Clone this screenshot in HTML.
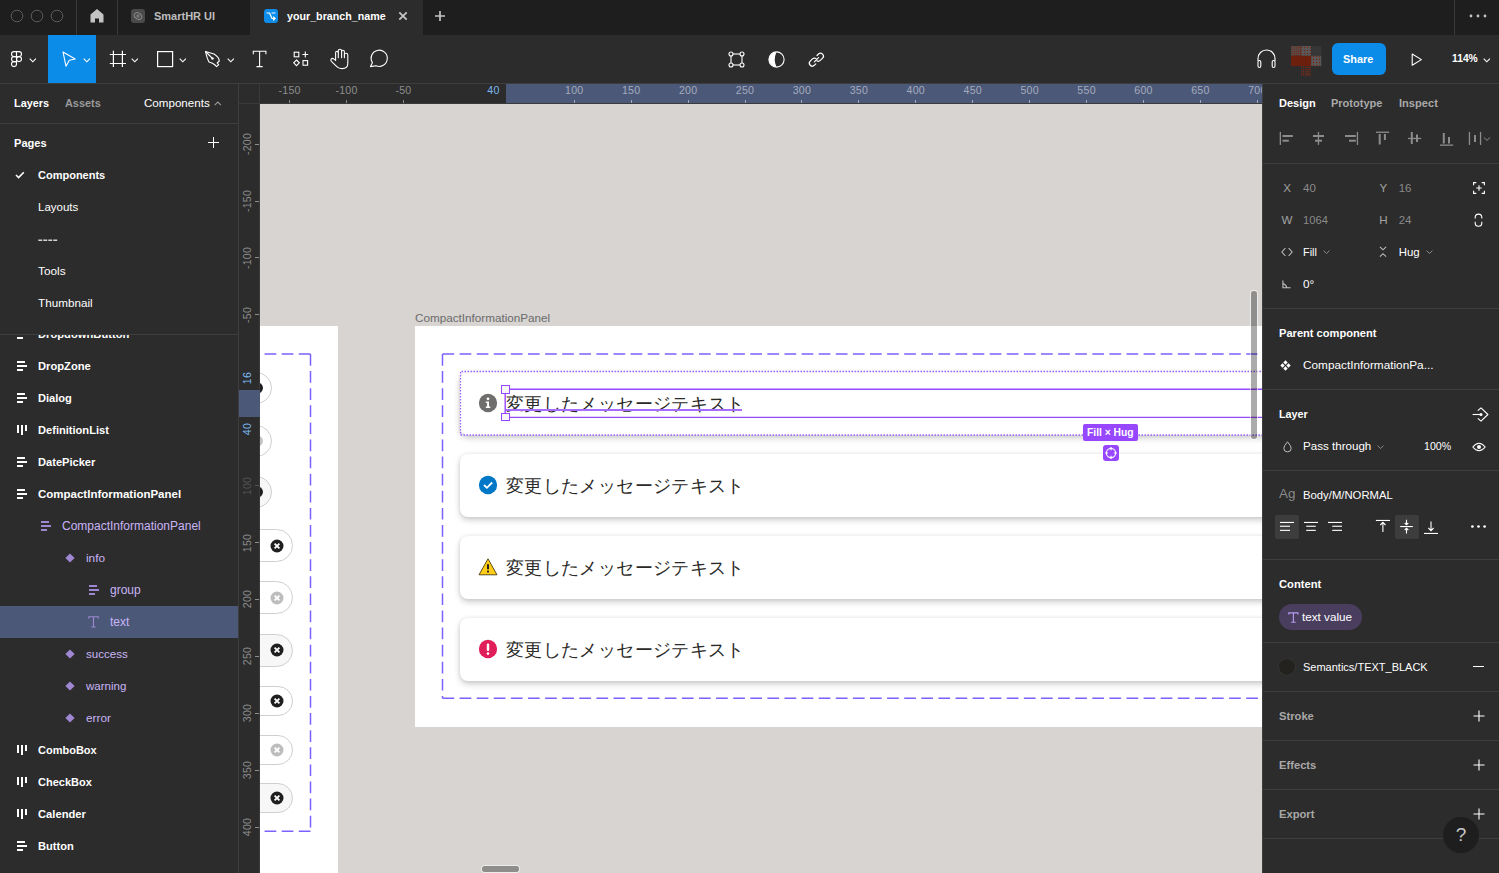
<!DOCTYPE html>
<html><head><meta charset="utf-8">
<style>
*{box-sizing:border-box;margin:0;padding:0}
html,body{width:1499px;height:873px;overflow:hidden;background:#2c2c2c;font-family:"Liberation Sans",sans-serif;color:#fff}
.a{position:absolute}
.t{position:absolute;white-space:nowrap;font-size:12px;line-height:14px}
.b{font-weight:bold}
svg{position:absolute;overflow:visible}
/* title bar */
#title{left:0;top:0;width:1499px;height:35px;background:#1e1e1e}
#toolbar{left:0;top:35px;width:1499px;height:49px;z-index:5;background:#2c2c2c;border-bottom:1px solid #3e3e3e}
#left{left:0;top:83px;width:239px;z-index:4;height:790px;background:#2c2c2c;border-right:1px solid #3e3e3e}
#right{left:1262px;top:83px;width:237px;height:790px;background:#2c2c2c;border-left:1px solid #3e3e3e}
#canvas{left:238px;top:83px;width:1024px;height:790px;background:#d7d4d1;overflow:hidden}
.hr{position:absolute;height:1px;background:#3e3e3e}
</style></head><body>
<div id="title" class="a">
<svg width="80" height="35" style="left:0;top:0"><g fill="none" stroke="#5a5a5a" stroke-width="1"><circle cx="17" cy="16" r="5.8"/><circle cx="37" cy="16" r="5.8"/><circle cx="57" cy="16" r="5.8"/></g></svg>
<div class="a" style="left:76px;top:0;width:1px;height:35px;background:#383838"></div>
<div class="a" style="left:117px;top:0;width:1px;height:35px;background:#383838"></div>
<svg width="16" height="16" style="left:89px;top:8.3px"><path d="M8 1 L14.5 6.5 V14.5 H10 V10.5 H6 V14.5 H1.5 V6.5 Z" fill="#c4c4c4"/></svg>
<div class="a" style="left:131px;top:9px;width:14px;height:14px;border-radius:3px;background:#4b4b4b"></div>
<svg width="14" height="14" style="left:131px;top:9px"><g fill="none" stroke="#8a8a8a" stroke-width="1"><ellipse cx="7" cy="7" rx="4" ry="3" transform="rotate(35 7 7)"/><circle cx="7" cy="7" r="1.2"/></g></svg>
<div class="t" style="left:154px;top:9px;font-size:11.0px;color:#bdbdbd;font-weight:bold">SmartHR UI</div>
<div class="a" style="left:250px;top:0;width:173px;height:35px;background:#2c2c2c"></div>
<div class="a" style="left:264px;top:9px;width:14px;height:14px;border-radius:3px;background:#0d8ce9"></div>
<svg width="14" height="14" style="left:264px;top:9px"><g fill="none" stroke="#fff" stroke-width="1.2" stroke-linecap="round" stroke-linejoin="round"><path d="M3 4 H5.5 L8 9.5 H11"/><path d="M9.5 8 L11 9.5 L9.5 11"/><path d="M8 4 H11"/></g></svg>
<div class="t" style="left:287px;top:9px;font-size:10.7px;color:#fff;font-weight:bold">your_branch_name</div>
<svg width="12" height="12" style="left:397px;top:10px"><g stroke="#c4c4c4" stroke-width="1.8"><path d="M2.3 2.3 L9.7 9.7 M9.7 2.3 L2.3 9.7"/></g></svg>
<svg width="14" height="14" style="left:433px;top:9px"><g stroke="#c4c4c4" stroke-width="1.7"><path d="M7 2 V12 M2 7 H12"/></g></svg>
<div class="a" style="left:1454px;top:0;width:1px;height:35px;background:#383838"></div>
<svg width="20" height="6" style="left:1469px;top:13px"><g fill="#c4c4c4"><circle cx="2" cy="3" r="1.4"/><circle cx="9" cy="3" r="1.4"/><circle cx="16" cy="3" r="1.4"/></g></svg>
</div>
<div id="toolbar" class="a">
<svg width="12" height="17" style="left:11px;top:16px"><g fill="none" stroke="#fff" stroke-width="1.1"><path d="M5.5 0.6 H3 A2.5 2.5 0 0 0 3 5.6 H5.5 Z"/><path d="M5.5 0.6 H8 A2.5 2.5 0 0 1 8 5.6 H5.5 Z"/><path d="M5.5 5.6 H3 A2.5 2.5 0 0 0 3 10.6 H5.5 Z"/><circle cx="8" cy="8.1" r="2.5"/><path d="M5.5 10.6 H3 A2.5 2.5 0 1 0 5.5 13.1 Z"/></g></svg>
<svg width="8" height="5" style="left:29px;top:23px"><path d="M0.7 0.7 L3.8 3.8 L6.9 0.7" fill="none" stroke="#fff" stroke-width="1.1"/></svg>
<div class="a" style="left:48px;top:0;width:48px;height:48px;background:#0c8ce9"></div>
<svg width="14" height="16" style="left:62px;top:16px"><path d="M1 1 L13.2 8 L7.3 9.2 L4 15.2 Z" fill="none" stroke="#fff" stroke-width="1.1" stroke-linejoin="round"/></svg>
<svg width="8" height="5" style="left:83px;top:23px"><path d="M0.7 0.7 L3.8 3.8 L6.9 0.7" fill="none" stroke="#fff" stroke-width="1.1"/></svg>
<svg width="18" height="18" style="left:109px;top:15px"><g stroke="#fff" stroke-width="1.2"><path d="M4.4 0.8 V17 M13.4 0.8 V17 M0.8 4.5 H17 M0.8 13.5 H17"/></g></svg>
<svg width="8" height="5" style="left:131px;top:23px"><path d="M0.7 0.7 L3.8 3.8 L6.9 0.7" fill="none" stroke="#fff" stroke-width="1.1"/></svg>
<svg width="18" height="18" style="left:156px;top:15px"><rect x="1.6" y="1.6" width="15" height="15" fill="none" stroke="#fff" stroke-width="1.2"/></svg>
<svg width="8" height="5" style="left:179px;top:23px"><path d="M0.7 0.7 L3.8 3.8 L6.9 0.7" fill="none" stroke="#fff" stroke-width="1.1"/></svg>
<svg width="18" height="18" style="left:204px;top:15px"><g fill="none" stroke="#fff" stroke-width="1.1" stroke-linejoin="round"><path d="M1.5 1.5 L10 4 Q15 7 15.3 11 L13.2 13 L14.7 14.6 L12.6 16.6 L11 15 Q9 13 5 12 Q3 8.5 1.5 1.5 Z"/><path d="M1.5 1.5 L8 8"/></g><circle cx="8.5" cy="8.5" r="1.2" fill="#fff"/></svg>
<svg width="8" height="5" style="left:227px;top:23px"><path d="M0.7 0.7 L3.8 3.8 L6.9 0.7" fill="none" stroke="#fff" stroke-width="1.1"/></svg>
<svg width="16" height="18" style="left:252px;top:15px"><g fill="none" stroke="#fff" stroke-width="1.1"><path d="M1.3 4.2 V1.2 H13.9 V4.2 M7.6 1.2 V16.6 M4.5 16.6 H10.7"/></g></svg>
<svg width="17" height="17" style="left:293px;top:16px"><g fill="none" stroke="#fff" stroke-width="1.1"><rect x="1.2" y="1.2" width="4.6" height="4.6"/><path d="M12.3 0.6 V6.4 M9.4 3.5 H15.2"/><path d="M3.5 9 L6.3 11.8 L3.5 14.6 L0.7 11.8 Z"/><rect x="10" y="9.6" width="4.6" height="4.6"/></g></svg>
<svg width="30" height="28" style="left:326px;top:10px"><g fill="none" stroke="#fff" stroke-width="1.1" stroke-linejoin="round" stroke-linecap="round"><path d="M9.6 15.4 V7.65 A1.35 1.35 0 0 1 12.3 7.65 V5.85 A1.65 1.65 0 0 1 15.6 5.85 V6.7 A1.4 1.4 0 0 1 18.4 6.7 V9.9 A1.7 1.7 0 0 1 21.8 9.9 V18.5 Q21.8 23.6 16 23.6 Q12.8 23.6 10.8 21.6 L5.4 16.4 Q4.3 15.2 5.2 14 Q6.5 12.8 8 14.1 L9.6 15.4"/><path d="M12.3 7.65 V12.8 M15.6 6.7 V12.8 M18.4 9.9 V12.8"/></g></svg>
<svg width="21" height="21" style="left:369.3px;top:14.3px"><path d="M1.5 17.6 L3.4 13.7 A8.1 8.1 0 1 1 6.9 16.7 Z" fill="none" stroke="#fff" stroke-width="1.1" stroke-linejoin="round"/></svg>
<svg width="18" height="18" style="left:727.5px;top:15.6px"><g fill="none" stroke="#fff" stroke-width="1.1"><rect x="3" y="3" width="11" height="11"/><circle cx="3" cy="3" r="2" fill="#2c2c2c"/><circle cx="14" cy="3" r="2" fill="#2c2c2c"/><circle cx="3" cy="14" r="2" fill="#2c2c2c"/><circle cx="14" cy="14" r="2" fill="#2c2c2c"/></g></svg>
<svg width="18" height="18" style="left:767.5px;top:15.6px"><circle cx="8.5" cy="8.5" r="7.6" fill="none" stroke="#fff" stroke-width="1.1"/><path d="M8.5 0.9 A7.6 7.6 0 0 0 8.5 16.1 Q5 8.5 8.5 0.9 Z" fill="#fff"/></svg>
<svg width="18" height="18" style="left:808px;top:16px"><g fill="none" stroke="#fff" stroke-width="1.2" stroke-linecap="round"><path d="M9 4.5 L10.5 3 A2.9 2.9 0 0 1 14.6 7.1 L12.3 9.4 A2.9 2.9 0 0 1 8.8 9.8"/><path d="M7.8 12.8 L6.3 14.3 A2.9 2.9 0 0 1 2.2 10.2 L4.5 7.9 A2.9 2.9 0 0 1 8 7.5"/><path d="M6.3 10.9 L10.6 6.6"/></g></svg>
<svg width="22" height="20" style="left:1256px;top:14px"><g fill="none" stroke="#fff" stroke-width="1.1"><path d="M2 12 V9.5 A8.5 8.5 0 0 1 19 9.5 V12"/><rect x="2" y="11.5" width="2.8" height="7" rx="1.4"/><rect x="16.2" y="11.5" width="2.8" height="7" rx="1.4"/></g></svg>
<svg width="32" height="36" style="left:1290.8px;top:10.9px"><defs>
<pattern id="pa" width="2.1" height="2.1" patternUnits="userSpaceOnUse"><rect width="2.1" height="2.1" fill="#505050"/><circle cx="1.05" cy="1.05" r="0.75" fill="#7a2210"/></pattern>
<pattern id="pb" width="3" height="3" patternUnits="userSpaceOnUse"><rect width="3" height="3" fill="#595959"/><circle cx="1.5" cy="1.5" r="0.7" fill="#7a2210"/></pattern>
<pattern id="pc" width="2" height="2" patternUnits="userSpaceOnUse"><rect width="2" height="2" fill="#333"/><circle cx="1" cy="1" r="0.5" fill="#444"/></pattern>
<pattern id="pd" width="2.2" height="2.2" patternUnits="userSpaceOnUse"><rect width="2.2" height="2.2" fill="#2c2c2c"/><circle cx="1.5" cy="1.5" r="0.75" fill="#8a2814"/></pattern>
</defs>
<rect x="0" y="0" width="10.1" height="9.8" fill="url(#pa)"/><rect x="10.1" y="0" width="10.1" height="9.8" fill="url(#pb)"/><rect x="20.2" y="0" width="10" height="9.8" fill="url(#pc)"/>
<rect x="0" y="9.8" width="20.2" height="10.3" fill="#6d1f0e"/><rect x="20.2" y="9.8" width="10" height="10.3" fill="url(#pb)"/>
<rect x="10.1" y="20.1" width="9.5" height="10" fill="url(#pd)"/>
</svg>
<div class="a" style="left:1332px;top:8px;width:54px;height:32px;border-radius:6px;background:#0c8ce9"></div>
<div class="t b" style="left:1343px;top:17px;font-size:10.9px">Share</div>
<svg width="12" height="14" style="left:1411.3px;top:17.6px"><path d="M1.2 1 L10.4 6.6 L1.2 12.2 Z" fill="none" stroke="#fff" stroke-width="1.1" stroke-linejoin="round"/></svg>
<div class="t b" style="left:1452px;top:17px;font-size:10.3px">114%</div>
<svg width="8" height="5" style="left:1483px;top:23px"><path d="M0.7 0.7 L3.8 3.8 L6.9 0.7" fill="none" stroke="#fff" stroke-width="1.1"/></svg>
</div>
<div id="left" class="a">
<div class="t b" style="left:14px;top:13px;font-size:10.9px">Layers</div>
<div class="t b" style="left:65px;top:13px;font-size:10.9px;color:#9a9a9a">Assets</div>
<div class="t" style="left:144px;top:13px;font-size:11.6px">Components</div>
<svg width="8" height="5" style="left:214px;top:18px"><path d="M0.7 4.2 L3.8 1.1 L6.9 4.2" fill="none" stroke="#9a9a9a" stroke-width="1.1"/></svg>
<div class="hr" style="left:0;top:40px;width:238px"></div>
<div class="t b" style="left:14px;top:53px;font-size:11.1px">Pages</div>
<svg width="12" height="12" style="left:207px;top:54px"><path d="M6.5 0 V11 M1 5.5 H12" stroke="#fff" stroke-width="1"/></svg>
<svg width="10" height="8" style="left:15px;top:88px"><path d="M1 4 L3.6 6.6 L8.8 1.2" fill="none" stroke="#fff" stroke-width="1.6"/></svg>
<div class="t b" style="left:38px;top:85px;font-size:11px">Components</div>
<div class="t" style="left:38px;top:117px;font-size:11.5px">Layouts</div>
<svg width="22" height="4" style="left:38px;top:155.5px"><g fill="#fff"><rect x="0.3" y="0.6" width="3.9" height="1.2"/><rect x="5.3" y="0.6" width="3.9" height="1.2"/><rect x="10.3" y="0.6" width="3.9" height="1.2"/><rect x="15.3" y="0.6" width="3.9" height="1.2"/></g></svg>
<div class="t" style="left:38px;top:181px;font-size:11.8px">Tools</div>
<div class="t" style="left:38px;top:213px;font-size:11.7px">Thumbnail</div>
<div class="a" style="left:0;top:251px;width:238px;height:539px;overflow:hidden">
<svg width="12" height="12" style="left:17px;top:-5px"><g fill="#ffffff"><rect x="0" y="0" width="8" height="2"/><rect x="0" y="4" width="10" height="2"/><rect x="0" y="8" width="6" height="2"/></g></svg><div class="t" style="left:38px;top:-7px;color:#ffffff;font-weight:bold;font-size:11.2px">DropdownButton</div><svg width="12" height="12" style="left:17px;top:27px"><g fill="#ffffff"><rect x="0" y="0" width="8" height="2"/><rect x="0" y="4" width="10" height="2"/><rect x="0" y="8" width="6" height="2"/></g></svg><div class="t" style="left:38px;top:25px;color:#ffffff;font-weight:bold;font-size:11.2px">DropZone</div><svg width="12" height="12" style="left:17px;top:59px"><g fill="#ffffff"><rect x="0" y="0" width="8" height="2"/><rect x="0" y="4" width="10" height="2"/><rect x="0" y="8" width="6" height="2"/></g></svg><div class="t" style="left:38px;top:57px;color:#ffffff;font-weight:bold;font-size:11.1px">Dialog</div><svg width="12" height="12" style="left:17px;top:91px"><g fill="#ffffff"><rect x="0" y="0" width="2" height="8"/><rect x="4" y="0" width="2" height="10"/><rect x="8" y="0" width="2" height="6"/></g></svg><div class="t" style="left:38px;top:89px;color:#ffffff;font-weight:bold;font-size:11.1px">DefinitionList</div><svg width="12" height="12" style="left:17px;top:123px"><g fill="#ffffff"><rect x="0" y="0" width="8" height="2"/><rect x="0" y="4" width="10" height="2"/><rect x="0" y="8" width="6" height="2"/></g></svg><div class="t" style="left:38px;top:121px;color:#ffffff;font-weight:bold;font-size:11.1px">DatePicker</div><svg width="12" height="12" style="left:17px;top:155px"><g fill="#ffffff"><rect x="0" y="0" width="8" height="2"/><rect x="0" y="4" width="10" height="2"/><rect x="0" y="8" width="6" height="2"/></g></svg><div class="t" style="left:38px;top:153px;color:#ffffff;font-weight:bold;font-size:11.5px">CompactInformationPanel</div><svg width="12" height="12" style="left:41px;top:187px"><g fill="#9f88d2"><rect x="0" y="0" width="8" height="2"/><rect x="0" y="4" width="10" height="2"/><rect x="0" y="8" width="6" height="2"/></g></svg><div class="t" style="left:62px;top:185px;color:#c9b5f6;font-weight:normal;font-size:12px">CompactInformationPanel</div><svg width="12" height="12" style="left:65px;top:219px"><path d="M5 0.4 L9.6 5 L5 9.6 L0.4 5 Z" fill="#9f88d2"/></svg><div class="t" style="left:86px;top:217px;color:#c9b5f6;font-weight:normal;font-size:11.8px">info</div><svg width="12" height="12" style="left:89px;top:251px"><g fill="#9f88d2"><rect x="0" y="0" width="8" height="2"/><rect x="0" y="4" width="10" height="2"/><rect x="0" y="8" width="6" height="2"/></g></svg><div class="t" style="left:110px;top:249px;color:#c9b5f6;font-weight:normal;font-size:12.0px">group</div><div class="a" style="left:0;top:272px;width:238px;height:32px;background:#4b5878"></div><svg width="12" height="12" style="left:88px;top:282px"><g fill="none" stroke="#9f88d2" stroke-width="1.1"><path d="M0.8 2.6 V0.8 H10.2 V2.6 M5.5 0.8 V11 M3.3 11 H7.7"/></g></svg><div class="t" style="left:110px;top:281px;color:#c9b5f6;font-weight:normal;font-size:12.0px">text</div><svg width="12" height="12" style="left:65px;top:315px"><path d="M5 0.4 L9.6 5 L5 9.6 L0.4 5 Z" fill="#9f88d2"/></svg><div class="t" style="left:86px;top:313px;color:#c9b5f6;font-weight:normal;font-size:11.6px">success</div><svg width="12" height="12" style="left:65px;top:347px"><path d="M5 0.4 L9.6 5 L5 9.6 L0.4 5 Z" fill="#9f88d2"/></svg><div class="t" style="left:86px;top:345px;color:#c9b5f6;font-weight:normal;font-size:11.5px">warning</div><svg width="12" height="12" style="left:65px;top:379px"><path d="M5 0.4 L9.6 5 L5 9.6 L0.4 5 Z" fill="#9f88d2"/></svg><div class="t" style="left:86px;top:377px;color:#c9b5f6;font-weight:normal;font-size:11.8px">error</div><svg width="12" height="12" style="left:17px;top:411px"><g fill="#ffffff"><rect x="0" y="0" width="2" height="8"/><rect x="4" y="0" width="2" height="10"/><rect x="8" y="0" width="2" height="6"/></g></svg><div class="t" style="left:38px;top:409px;color:#ffffff;font-weight:bold;font-size:11.0px">ComboBox</div><svg width="12" height="12" style="left:17px;top:443px"><g fill="#ffffff"><rect x="0" y="0" width="2" height="8"/><rect x="4" y="0" width="2" height="10"/><rect x="8" y="0" width="2" height="6"/></g></svg><div class="t" style="left:38px;top:441px;color:#ffffff;font-weight:bold;font-size:11.0px">CheckBox</div><svg width="12" height="12" style="left:17px;top:475px"><g fill="#ffffff"><rect x="0" y="0" width="2" height="8"/><rect x="4" y="0" width="2" height="10"/><rect x="8" y="0" width="2" height="6"/></g></svg><div class="t" style="left:38px;top:473px;color:#ffffff;font-weight:bold;font-size:11.2px">Calender</div><svg width="12" height="12" style="left:17px;top:507px"><g fill="#ffffff"><rect x="0" y="0" width="8" height="2"/><rect x="0" y="4" width="10" height="2"/><rect x="0" y="8" width="6" height="2"/></g></svg><div class="t" style="left:38px;top:505px;color:#ffffff;font-weight:bold;font-size:11.1px">Button</div></div>
<div class="hr" style="left:0;top:251px;width:238px"></div>
</div>
<div id="canvas" class="a"><div class="a" style="left:-238px;top:-83px;width:1499px;height:873px">
<!-- left frame -->
<div class="a" style="left:260px;top:326px;width:78.2px;height:560px;background:#fff"></div>
<svg width="1499" height="873" style="left:0;top:0">
<g fill="none" stroke="#7b61ff" stroke-width="1.5" stroke-dasharray="11.7 5.4">
<path d="M310.5 354 H200"/><path d="M310.5 354 V831.3"/><path d="M310.5 831.3 H200"/>
</g></svg>
<div class="a" style="left:240px;top:372px;width:32px;height:32px;border-radius:50%;border:1px solid #cfcfcf;background:#fff"></div><div class="a" style="left:250px;top:382px;width:13px;height:12px;border-radius:50%;background:#1f1f1f"></div><div class="a" style="left:240px;top:425px;width:32px;height:32px;border-radius:50%;border:1px solid #cfcfcf;background:#fff"></div><div class="a" style="left:250px;top:435px;width:13px;height:12px;border-radius:50%;background:#c4c4c4"></div><div class="a" style="left:240px;top:476px;width:32px;height:32px;border-radius:50%;border:1px solid #cfcfcf;background:#f7f7f7"></div><div class="a" style="left:250px;top:486px;width:13px;height:12px;border-radius:50%;background:#1f1f1f"></div><div class="a" style="left:200px;top:529.4px;width:92.5px;height:33px;border-radius:16.5px;border:1px solid #cfcfcf;background:#fff"></div><svg width="14" height="14" style="left:270.3px;top:538.9px"><circle cx="7" cy="7" r="6.5" fill="#1f1f1f"/><path d="M4.6 4.6 L9.4 9.4 M9.4 4.6 L4.6 9.4" stroke="#fff" stroke-width="1.8"/></svg><div class="a" style="left:200px;top:581.3px;width:92.5px;height:33px;border-radius:16.5px;border:1px solid #cfcfcf;background:#fff"></div><svg width="14" height="14" style="left:270.3px;top:590.8px"><circle cx="7" cy="7" r="6.5" fill="#bdbdbd"/><path d="M4.6 4.6 L9.4 9.4 M9.4 4.6 L4.6 9.4" stroke="#fff" stroke-width="1.8"/></svg><div class="a" style="left:200px;top:633.5px;width:92.5px;height:33px;border-radius:16.5px;border:1px solid #cfcfcf;background:#f7f7f7"></div><svg width="14" height="14" style="left:270.3px;top:643px"><circle cx="7" cy="7" r="6.5" fill="#1f1f1f"/><path d="M4.6 4.6 L9.4 9.4 M9.4 4.6 L4.6 9.4" stroke="#fff" stroke-width="1.8"/></svg><div class="a" style="left:200px;top:685.8px;width:92.5px;height:30px;border-radius:15.0px;border:1px solid #cfcfcf;background:#fff"></div><svg width="14" height="14" style="left:270.3px;top:693.8px"><circle cx="7" cy="7" r="6.5" fill="#1f1f1f"/><path d="M4.6 4.6 L9.4 9.4 M9.4 4.6 L4.6 9.4" stroke="#fff" stroke-width="1.8"/></svg><div class="a" style="left:200px;top:734.8px;width:92.5px;height:30px;border-radius:15.0px;border:1px solid #cfcfcf;background:#fff"></div><svg width="14" height="14" style="left:270.3px;top:742.8px"><circle cx="7" cy="7" r="6.5" fill="#bdbdbd"/><path d="M4.6 4.6 L9.4 9.4 M9.4 4.6 L4.6 9.4" stroke="#fff" stroke-width="1.8"/></svg><div class="a" style="left:200px;top:783.4px;width:92.5px;height:30px;border-radius:15.0px;border:1px solid #cfcfcf;background:#f7f7f7"></div><svg width="14" height="14" style="left:270.3px;top:791.4px"><circle cx="7" cy="7" r="6.5" fill="#1f1f1f"/><path d="M4.6 4.6 L9.4 9.4 M9.4 4.6 L4.6 9.4" stroke="#fff" stroke-width="1.8"/></svg>
<div class="t" style="left:415px;top:311px;font-size:11.7px;color:#6b6b6b">CompactInformationPanel</div>
<div class="a" style="left:414.7px;top:326px;width:900px;height:400.5px;background:#fff"></div>
<svg width="1499" height="873" style="left:0;top:0">
<g fill="none" stroke="#7b61ff" stroke-width="1.5" stroke-dasharray="11.7 5.4">
<path d="M442.5 354 H1300"/><path d="M442.5 354 V698.3"/><path d="M442.5 698.3 H1300"/>
</g></svg>
<div class="a" style="left:460px;top:371.5px;width:900px;height:63.4px;border-radius:8px;background:#fff;box-shadow:0 3px 6px rgba(0,0,0,0.2),0 0 4px rgba(0,0,0,0.07)"></div><div class="a" style="left:460px;top:453.5px;width:900px;height:63.4px;border-radius:8px;background:#fff;box-shadow:0 3px 6px rgba(0,0,0,0.2),0 0 4px rgba(0,0,0,0.07)"></div><div class="a" style="left:460px;top:535.7px;width:900px;height:63.4px;border-radius:8px;background:#fff;box-shadow:0 3px 6px rgba(0,0,0,0.2),0 0 4px rgba(0,0,0,0.07)"></div><div class="a" style="left:460px;top:617.8px;width:900px;height:63.4px;border-radius:8px;background:#fff;box-shadow:0 3px 6px rgba(0,0,0,0.2),0 0 4px rgba(0,0,0,0.07)"></div><div class="t" style="left:506px;top:392.5px;font-size:18px;line-height:22px;letter-spacing:0.36px;color:#2b2a27">変更したメッセージテキスト</div><div class="t" style="left:506px;top:474.5px;font-size:18px;line-height:22px;letter-spacing:0.36px;color:#2b2a27">変更したメッセージテキスト</div><div class="t" style="left:506px;top:556.7px;font-size:18px;line-height:22px;letter-spacing:0.36px;color:#2b2a27">変更したメッセージテキスト</div><div class="t" style="left:506px;top:638.8px;font-size:18px;line-height:22px;letter-spacing:0.36px;color:#2b2a27">変更したメッセージテキスト</div><svg width="20" height="20" style="left:477.8px;top:393.0px"><circle cx="10" cy="10" r="9.15" fill="#706e6d"/><circle cx="10" cy="5.8" r="1.4" fill="#fff"/><path d="M7.8 8.6 H11 V13.6 H12.3 V14.9 H7.8 V13.6 H9.1 V9.9 H7.8 Z" fill="#fff"/></svg>
<svg width="20" height="20" style="left:477.8px;top:475.0px"><circle cx="10" cy="10" r="9.15" fill="#0077c7"/><path d="M6 10 L8.9 12.8 L14.2 7.5" fill="none" stroke="#fff" stroke-width="1.8"/></svg>
<svg width="20" height="20" style="left:477.8px;top:557.2px"><path d="M10 1.8 L19 17.8 H1 Z" fill="#ffcc17" stroke="#4a3c10" stroke-width="0.9" stroke-linejoin="round"/><rect x="9" y="7" width="2" height="5.5" rx="0.8" fill="#23221e"/><circle cx="10" cy="14.6" r="1.1" fill="#23221e"/></svg>
<svg width="20" height="20" style="left:477.8px;top:639.3px"><circle cx="10" cy="10" r="9.15" fill="#e01e5a"/><rect x="8.8" y="4.6" width="2.4" height="7.4" rx="1" fill="#fff"/><circle cx="10" cy="14.6" r="1.3" fill="#fff"/></svg>

<svg width="1499" height="873" style="left:0;top:0"><path d="M1300 371.5 H460.5 V435 H1300" fill="none" stroke="#9b66ff" stroke-width="1.3" stroke-dasharray="1.5 1.5"/></svg>
<svg width="1499" height="873" style="left:0;top:0"><path d="M1300 389.3 H505.2 V417.4 H1300" fill="none" stroke="#9747ff" stroke-width="1.4"/></svg>
<div class="a" style="left:506px;top:409.2px;width:236px;height:1.5px;background:#a66bff"></div>
<div class="a" style="left:501.3px;top:385.3px;width:8.4px;height:8.4px;background:#f7f7f7;border:1.4px solid #9747ff"></div>
<div class="a" style="left:501.3px;top:413.1px;width:8.4px;height:8.4px;background:#f7f7f7;border:1.4px solid #9747ff"></div>
<div class="a" style="left:1083px;top:424.2px;width:55px;height:17px;border-radius:2px;background:#9747ff"></div>
<div class="t b" style="left:1087px;top:426px;font-size:10.3px;line-height:13px;color:#fff">Fill × Hug</div>
<div class="a" style="left:1103px;top:445px;width:16px;height:16px;border-radius:3px;background:#9747ff"></div>
<svg width="16" height="16" style="left:1103px;top:445px"><circle cx="8" cy="8" r="4.6" fill="none" stroke="#fff" stroke-width="1.1"/><path d="M8 2 V5.2 M8 10.8 V14 M2 8 H5.2 M10.8 8 H14" stroke="#fff" stroke-width="1.2"/></svg>
<div class="a" style="left:1251.3px;top:290.8px;width:5.4px;height:148.5px;border-radius:2.7px;background:rgba(0,0,0,0.33);box-shadow:0 0 0 1px rgba(255,255,255,0.55)"></div>
<div class="a" style="left:482px;top:866.2px;width:37px;height:5.4px;border-radius:2.7px;background:rgba(0,0,0,0.335);box-shadow:0 0 0 1px rgba(255,255,255,0.55)"></div>
</div>
<!-- rulers -->
<div class="a" style="left:0;top:0;width:1024px;height:21px;background:#2c2c2c;border-bottom:1px solid #3a3a3a"></div>
<div class="a" style="left:0;top:0;width:22px;height:790px;background:#2c2c2c;border-right:1px solid #3a3a3a"></div>
<div class="a" style="left:267.9px;top:1px;width:760px;height:19px;background:#4b5878"></div>
<div class="t" style="left:21.62px;top:0.5px;width:60px;text-align:center;font-size:10.6px;line-height:12px;letter-spacing:0.25px;color:#8e8e8e">-150</div><div class="a" style="left:51.12px;top:16.5px;width:1px;height:3.5px;background:#8a8a8a"></div>
<div class="t" style="left:78.55px;top:0.5px;width:60px;text-align:center;font-size:10.6px;line-height:12px;letter-spacing:0.25px;color:#8e8e8e">-100</div><div class="a" style="left:108.05px;top:16.5px;width:1px;height:3.5px;background:#8a8a8a"></div>
<div class="t" style="left:135.47px;top:0.5px;width:60px;text-align:center;font-size:10.6px;line-height:12px;letter-spacing:0.25px;color:#8e8e8e">-50</div><div class="a" style="left:164.97px;top:16.5px;width:1px;height:3.5px;background:#8a8a8a"></div>
<div class="t" style="left:306.25px;top:0.5px;width:60px;text-align:center;font-size:10.6px;line-height:12px;letter-spacing:0.25px;color:#a3abbd">100</div><div class="a" style="left:335.75px;top:16.5px;width:1px;height:3.5px;background:#a3abbd"></div>
<div class="t" style="left:363.17px;top:0.5px;width:60px;text-align:center;font-size:10.6px;line-height:12px;letter-spacing:0.25px;color:#a3abbd">150</div><div class="a" style="left:392.67px;top:16.5px;width:1px;height:3.5px;background:#a3abbd"></div>
<div class="t" style="left:420.10px;top:0.5px;width:60px;text-align:center;font-size:10.6px;line-height:12px;letter-spacing:0.25px;color:#a3abbd">200</div><div class="a" style="left:449.60px;top:16.5px;width:1px;height:3.5px;background:#a3abbd"></div>
<div class="t" style="left:477.02px;top:0.5px;width:60px;text-align:center;font-size:10.6px;line-height:12px;letter-spacing:0.25px;color:#a3abbd">250</div><div class="a" style="left:506.52px;top:16.5px;width:1px;height:3.5px;background:#a3abbd"></div>
<div class="t" style="left:533.95px;top:0.5px;width:60px;text-align:center;font-size:10.6px;line-height:12px;letter-spacing:0.25px;color:#a3abbd">300</div><div class="a" style="left:563.45px;top:16.5px;width:1px;height:3.5px;background:#a3abbd"></div>
<div class="t" style="left:590.88px;top:0.5px;width:60px;text-align:center;font-size:10.6px;line-height:12px;letter-spacing:0.25px;color:#a3abbd">350</div><div class="a" style="left:620.38px;top:16.5px;width:1px;height:3.5px;background:#a3abbd"></div>
<div class="t" style="left:647.80px;top:0.5px;width:60px;text-align:center;font-size:10.6px;line-height:12px;letter-spacing:0.25px;color:#a3abbd">400</div><div class="a" style="left:677.30px;top:16.5px;width:1px;height:3.5px;background:#a3abbd"></div>
<div class="t" style="left:704.73px;top:0.5px;width:60px;text-align:center;font-size:10.6px;line-height:12px;letter-spacing:0.25px;color:#a3abbd">450</div><div class="a" style="left:734.23px;top:16.5px;width:1px;height:3.5px;background:#a3abbd"></div>
<div class="t" style="left:761.65px;top:0.5px;width:60px;text-align:center;font-size:10.6px;line-height:12px;letter-spacing:0.25px;color:#a3abbd">500</div><div class="a" style="left:791.15px;top:16.5px;width:1px;height:3.5px;background:#a3abbd"></div>
<div class="t" style="left:818.58px;top:0.5px;width:60px;text-align:center;font-size:10.6px;line-height:12px;letter-spacing:0.25px;color:#a3abbd">550</div><div class="a" style="left:848.08px;top:16.5px;width:1px;height:3.5px;background:#a3abbd"></div>
<div class="t" style="left:875.50px;top:0.5px;width:60px;text-align:center;font-size:10.6px;line-height:12px;letter-spacing:0.25px;color:#a3abbd">600</div><div class="a" style="left:905.00px;top:16.5px;width:1px;height:3.5px;background:#a3abbd"></div>
<div class="t" style="left:932.43px;top:0.5px;width:60px;text-align:center;font-size:10.6px;line-height:12px;letter-spacing:0.25px;color:#a3abbd">650</div><div class="a" style="left:961.93px;top:16.5px;width:1px;height:3.5px;background:#a3abbd"></div>
<div class="t" style="left:989.35px;top:0.5px;width:60px;text-align:center;font-size:10.6px;line-height:12px;letter-spacing:0.25px;color:#a3abbd">700</div><div class="a" style="left:1018.85px;top:16.5px;width:1px;height:3.5px;background:#a3abbd"></div>
<div class="t" style="left:231.60000000000002px;top:0.5px;width:30px;text-align:right;font-size:10.6px;line-height:12px;letter-spacing:0.25px;color:#7cb8f2">40</div>
<div class="a" style="left:1px;top:306.5px;width:20.6px;height:27.2px;background:#4b5878"></div>
<div class="t" style="left:-21px;top:55.12px;width:60px;text-align:center;font-size:10.6px;line-height:12px;letter-spacing:0.25px;color:#8e8e8e;transform:rotate(-90deg)">-200</div><div class="a" style="left:17px;top:60.62px;width:4px;height:1px;background:#8e8e8e"></div>
<div class="t" style="left:-21px;top:112.04px;width:60px;text-align:center;font-size:10.6px;line-height:12px;letter-spacing:0.25px;color:#8e8e8e;transform:rotate(-90deg)">-150</div><div class="a" style="left:17px;top:117.54px;width:4px;height:1px;background:#8e8e8e"></div>
<div class="t" style="left:-21px;top:168.96px;width:60px;text-align:center;font-size:10.6px;line-height:12px;letter-spacing:0.25px;color:#8e8e8e;transform:rotate(-90deg)">-100</div><div class="a" style="left:17px;top:174.46px;width:4px;height:1px;background:#8e8e8e"></div>
<div class="t" style="left:-21px;top:225.88px;width:60px;text-align:center;font-size:10.6px;line-height:12px;letter-spacing:0.25px;color:#8e8e8e;transform:rotate(-90deg)">-50</div><div class="a" style="left:17px;top:231.38px;width:4px;height:1px;background:#8e8e8e"></div>
<div class="t" style="left:-21px;top:396.64px;width:60px;text-align:center;font-size:10.6px;line-height:12px;letter-spacing:0.25px;color:#555555;transform:rotate(-90deg)">100</div><div class="a" style="left:17px;top:402.14px;width:4px;height:1px;background:#555555"></div>
<div class="t" style="left:-21px;top:453.56px;width:60px;text-align:center;font-size:10.6px;line-height:12px;letter-spacing:0.25px;color:#8e8e8e;transform:rotate(-90deg)">150</div><div class="a" style="left:17px;top:459.06px;width:4px;height:1px;background:#8e8e8e"></div>
<div class="t" style="left:-21px;top:510.48px;width:60px;text-align:center;font-size:10.6px;line-height:12px;letter-spacing:0.25px;color:#8e8e8e;transform:rotate(-90deg)">200</div><div class="a" style="left:17px;top:515.98px;width:4px;height:1px;background:#8e8e8e"></div>
<div class="t" style="left:-21px;top:567.40px;width:60px;text-align:center;font-size:10.6px;line-height:12px;letter-spacing:0.25px;color:#8e8e8e;transform:rotate(-90deg)">250</div><div class="a" style="left:17px;top:572.90px;width:4px;height:1px;background:#8e8e8e"></div>
<div class="t" style="left:-21px;top:624.32px;width:60px;text-align:center;font-size:10.6px;line-height:12px;letter-spacing:0.25px;color:#8e8e8e;transform:rotate(-90deg)">300</div><div class="a" style="left:17px;top:629.82px;width:4px;height:1px;background:#8e8e8e"></div>
<div class="t" style="left:-21px;top:681.24px;width:60px;text-align:center;font-size:10.6px;line-height:12px;letter-spacing:0.25px;color:#8e8e8e;transform:rotate(-90deg)">350</div><div class="a" style="left:17px;top:686.74px;width:4px;height:1px;background:#8e8e8e"></div>
<div class="t" style="left:-21px;top:738.16px;width:60px;text-align:center;font-size:10.6px;line-height:12px;letter-spacing:0.25px;color:#8e8e8e;transform:rotate(-90deg)">400</div><div class="a" style="left:17px;top:743.66px;width:4px;height:1px;background:#8e8e8e"></div>
<div class="t" style="left:-21px;top:289.3px;width:60px;text-align:center;font-size:10.6px;line-height:12px;letter-spacing:0.25px;color:#7cb8f2;transform:rotate(-90deg)">16</div>
<div class="t" style="left:-21px;top:339.7px;width:60px;text-align:center;font-size:10.6px;line-height:12px;letter-spacing:0.25px;color:#7cb8f2;transform:rotate(-90deg)">40</div>
<div class="a" style="left:0;top:0;width:22px;height:21px;background:#2c2c2c;border-right:1px solid #3a3a3a;border-bottom:1px solid #3a3a3a"></div>
</div>
<div id="right" class="a"><div class="a" style="left:-1263px;top:-83px;width:1500px;height:873px">
<div class="t b" style="left:1279px;top:95.5px;font-size:11.0px">Design</div>
<div class="t b" style="left:1331px;top:95.5px;font-size:11.0px;color:#a9a9a9">Prototype</div>
<div class="t b" style="left:1399px;top:95.5px;font-size:11.1px;color:#a9a9a9">Inspect</div>
<svg width="236" height="20" style="left:1263px;top:128px"><g fill="#8c8c8c" transform="translate(-1263 -128)">
<rect x="1279.7" y="131.9" width="1.3" height="13"/><rect x="1282.5" y="135" width="10.3" height="2"/><rect x="1282.5" y="139.7" width="6.3" height="2"/>
<rect x="1317.8" y="131.9" width="1.3" height="13"/><rect x="1313" y="135" width="11" height="2"/><rect x="1315" y="139.7" width="7" height="2"/>
<rect x="1356.8" y="131.9" width="1.3" height="13"/><rect x="1345" y="135" width="10.8" height="2"/><rect x="1349" y="139.7" width="6.8" height="2"/>
<rect x="1376" y="131.6" width="13.2" height="1.3"/><rect x="1378.7" y="134" width="2" height="10.5"/><rect x="1383.9" y="134" width="2" height="6"/>
<rect x="1408" y="137.8" width="13.2" height="1.3"/><rect x="1410.8" y="132" width="2" height="12"/><rect x="1416" y="134.5" width="2" height="7.5"/>
<rect x="1440" y="144.5" width="13.2" height="1.3"/><rect x="1442.8" y="133" width="2" height="10.5"/><rect x="1448" y="137" width="2" height="6.5"/>
<rect x="1468.8" y="131.9" width="1.3" height="13"/><rect x="1479.9" y="131.9" width="1.3" height="13"/><rect x="1474" y="135" width="2" height="7"/>
</g><path d="M220.9 9.4 L224 12.4 L227.1 9.4" fill="none" stroke="#8c8c8c" stroke-width="1" /></svg>
<div class="hr" style="left:1263px;top:163px;width:236px"></div>
<div class="t" style="left:1283.3px;top:181px;font-size:11.6px;color:#a3a3a3;font-weight:normal">X</div><div class="t" style="left:1303px;top:181px;font-size:11.5px;color:#8a8a8a;font-weight:normal">40</div><div class="t" style="left:1379.5px;top:181px;font-size:11.6px;color:#a3a3a3;font-weight:normal">Y</div><div class="t" style="left:1398.7px;top:181px;font-size:11.5px;color:#8a8a8a;font-weight:normal">16</div><div class="t" style="left:1281.6px;top:213px;font-size:11.6px;color:#a3a3a3;font-weight:normal">W</div><div class="t" style="left:1303px;top:213px;font-size:11.2px;color:#8a8a8a;font-weight:normal">1064</div><div class="t" style="left:1379.2px;top:213px;font-size:11.6px;color:#a3a3a3;font-weight:normal">H</div><div class="t" style="left:1398.7px;top:213px;font-size:11.5px;color:#8a8a8a;font-weight:normal">24</div><svg width="13" height="13" style="left:1472.5px;top:181.5px"><g fill="none" stroke="#fff" stroke-width="1.1"><path d="M0.6 3.3 V0.6 H3.3 M8.7 0.6 H11.4 V3.3 M11.4 8.7 V11.4 H8.7 M3.3 11.4 H0.6 V8.7"/><path d="M6 3.3 V8.7 M3.3 6 H8.7"/></g></svg>
<svg width="10" height="15" style="left:1473.5px;top:212.8px"><g fill="none" stroke="#fff" stroke-width="1.1"><path d="M1.2 5.6 V4.4 A3.3 3.3 0 0 1 7.8 4.4 V5.6"/><path d="M1.2 8.8 V10 A3.3 3.3 0 0 0 7.8 10 V8.8"/></g></svg>
<svg width="13" height="10" style="left:1281px;top:247px"><path d="M4.4 1 L0.9 5 L4.4 9 M7.6 1 L11.1 5 L7.6 9" fill="none" stroke="#bdbdbd" stroke-width="1.1"/></svg>
<div class="t" style="left:1303px;top:245px;font-size:10.9px;color:#fff;font-weight:normal">Fill</div><svg width="8" height="5" style="left:1322.5px;top:250.3px"><path d="M0.6 0.6 L3.5 3.6 L6.4 0.6" fill="none" stroke="#8c8c8c" stroke-width="1"/></svg><svg width="9" height="12" style="left:1378.7px;top:246.3px"><path d="M0.9 0.8 L4 3.8 L7.1 0.8 M0.9 10.7 L4 7.7 L7.1 10.7" fill="none" stroke="#bdbdbd" stroke-width="1.1"/></svg><div class="t" style="left:1398.8px;top:245px;font-size:11.4px;color:#fff;font-weight:normal">Hug</div><svg width="8" height="5" style="left:1425.5px;top:250.3px"><path d="M0.6 0.6 L3.5 3.6 L6.4 0.6" fill="none" stroke="#8c8c8c" stroke-width="1"/></svg><svg width="10" height="10" style="left:1282.3px;top:279.8px"><path d="M0.9 0.5 V7.7 H8.6 M0.9 3.6 Q4.2 4.5 4.8 7.7" fill="none" stroke="#bdbdbd" stroke-width="1.1"/></svg><div class="t" style="left:1303px;top:277px;font-size:11.8px;color:#fff;font-weight:normal">0°</div><div class="hr" style="left:1263px;top:308px;width:236px"></div><div class="t" style="left:1279px;top:326px;font-size:11.1px;color:#fff;font-weight:bold">Parent component</div><svg width="12" height="12" style="left:1279.5px;top:359.5px"><g fill="#fff"><path d="M5.5 0.3 L7.7 2.5 L5.5 4.7 L3.3 2.5 Z"/><path d="M5.5 6.3 L7.7 8.5 L5.5 10.7 L3.3 8.5 Z"/><path d="M2.5 3.3 L4.7 5.5 L2.5 7.7 L0.3 5.5 Z"/><path d="M8.5 3.3 L10.7 5.5 L8.5 7.7 L6.3 5.5 Z"/></g></svg><div class="t" style="left:1303px;top:358px;font-size:11.8px;color:#fff;font-weight:normal">CompactInformationPa...</div><div class="hr" style="left:1263px;top:389px;width:236px"></div><div class="t" style="left:1279px;top:407px;font-size:10.8px;color:#fff;font-weight:bold">Layer</div><svg width="18" height="16" style="left:1471.5px;top:406.5px"><g fill="none" stroke="#fff" stroke-width="1.1" stroke-linejoin="round"><path d="M5.8 3.6 L9 0.8 L15.9 7.5 L9 14.2 L5.8 11.4"/><path d="M0.6 7.5 H9"/></g><circle cx="9" cy="7.5" r="1.5" fill="#fff"/></svg>
<svg width="10" height="12" style="left:1282.5px;top:440.8px"><path d="M4.5 0.8 Q8.3 5.2 8.2 7.2 A3.7 3.7 0 0 1 0.8 7.2 Q0.7 5.2 4.5 0.8 Z" fill="none" stroke="#bdbdbd" stroke-width="1"/></svg>
<div class="t" style="left:1303px;top:439px;font-size:11.6px;color:#fff;font-weight:normal">Pass through</div><svg width="8" height="5" style="left:1376.5px;top:444.5px"><path d="M0.6 0.6 L3.5 3.6 L6.4 0.6" fill="none" stroke="#8c8c8c" stroke-width="1"/></svg><div class="t" style="left:1424px;top:439px;font-size:10.6px;color:#fff;font-weight:normal">100%</div><svg width="15" height="10" style="left:1472px;top:441.5px"><path d="M0.8 5 Q7 -2.5 13.2 5 Q7 12.5 0.8 5 Z" fill="none" stroke="#fff" stroke-width="1.1"/><circle cx="7" cy="5" r="2" fill="#fff"/></svg><div class="hr" style="left:1263px;top:470px;width:236px"></div><div class="t" style="left:1279px;top:486px;font-size:13.4px;line-height:16px;color:#8a8a8a">Ag</div><div class="t" style="left:1303px;top:488px;font-size:11.3px;color:#fff;font-weight:normal">Body/M/NORMAL</div><div class="a" style="left:1275px;top:515px;width:24px;height:24px;border-radius:2px;background:#3d3d3d"></div>
<div class="a" style="left:1395px;top:515px;width:24px;height:24px;border-radius:2px;background:#3d3d3d"></div>
<svg width="236" height="30" style="left:1263px;top:512px"><g transform="translate(-1263 -512)" fill="#fff">
<rect x="1280" y="521.9" width="14" height="1.1"/><rect x="1280" y="525.7" width="10" height="1.1"/><rect x="1280" y="529.8" width="10" height="1.1"/>
<rect x="1304" y="521.9" width="14" height="1.1"/><rect x="1306.2" y="525.7" width="9.6" height="1.1"/><rect x="1306.2" y="529.8" width="9.6" height="1.1"/>
<rect x="1328" y="521.9" width="14" height="1.1"/><rect x="1332.2" y="525.7" width="9.8" height="1.1"/><rect x="1332.2" y="529.8" width="9.8" height="1.1"/>
<rect x="1375.9" y="519.9" width="14.1" height="1.1"/>
<rect x="1400.2" y="526" width="12.6" height="1.1"/>
<rect x="1424" y="532.9" width="14" height="1.1"/>
</g><g transform="translate(-1263 -512)" fill="none" stroke="#fff" stroke-width="1.1">
<path d="M1382.9 522.5 V532 M1380.3 525 L1382.9 522.4 L1385.5 525"/>
<path d="M1406.5 519.8 V524.5 M1404.7 523 L1406.5 524.8 L1408.3 523 M1406.5 533.4 V528.5 M1404.7 530 L1406.5 528.2 L1408.3 530"/>
<path d="M1431 521.5 V530.6 M1428.4 528 L1431 530.6 L1433.6 528"/>
</g><g transform="translate(-1263 -512)" fill="#fff"><circle cx="1472.4" cy="526.5" r="1.35"/><circle cx="1478.5" cy="526.5" r="1.35"/><circle cx="1484.6" cy="526.5" r="1.35"/></g></svg>
<div class="hr" style="left:1263px;top:559px;width:236px"></div><div class="t" style="left:1279px;top:577px;font-size:11.2px;color:#fff;font-weight:bold">Content</div><div class="a" style="left:1279px;top:604.2px;width:83px;height:25.6px;border-radius:13px;background:#4a3e5f"></div>
<svg width="11" height="11" style="left:1287.5px;top:611.5px"><g fill="none" stroke="#b89cf0" stroke-width="1.1"><path d="M0.8 2.6 V0.9 H10 V2.6 M5.4 0.9 V10.3 M3.2 10.3 H7.6"/></g></svg>
<div class="t" style="left:1302px;top:610px;font-size:11.7px;color:#fff;font-weight:normal">text value</div><div class="hr" style="left:1263px;top:642px;width:236px"></div><div class="a" style="left:1279.2px;top:659.2px;width:15.4px;height:15.4px;border-radius:50%;background:#23221e;box-shadow:0 0 0 0.6px #3a3a3a"></div><div class="t" style="left:1303px;top:660px;font-size:11.0px;color:#fff;font-weight:normal">Semantics/TEXT_BLACK</div><div class="a" style="left:1472.8px;top:666px;width:11.4px;height:1.1px;background:#fff"></div><div class="hr" style="left:1263px;top:691px;width:236px"></div><div class="t" style="left:1279px;top:709px;font-size:11.2px;color:#a8a8a8;font-weight:bold">Stroke</div><svg width="12" height="12" style="left:1472.5px;top:710px"><path d="M6 0.5 V11.5 M0.5 6 H11.5" stroke="#fff" stroke-width="1.1"/></svg><div class="hr" style="left:1263px;top:740px;width:236px"></div><div class="t" style="left:1279px;top:758px;font-size:11.2px;color:#a8a8a8;font-weight:bold">Effects</div><svg width="12" height="12" style="left:1472.5px;top:759px"><path d="M6 0.5 V11.5 M0.5 6 H11.5" stroke="#fff" stroke-width="1.1"/></svg><div class="hr" style="left:1263px;top:789px;width:236px"></div><div class="t" style="left:1279px;top:807px;font-size:11.2px;color:#a8a8a8;font-weight:bold">Export</div><svg width="12" height="12" style="left:1472.5px;top:808px"><path d="M6 0.5 V11.5 M0.5 6 H11.5" stroke="#fff" stroke-width="1.1"/></svg><div class="hr" style="left:1263px;top:838px;width:236px"></div><div class="a" style="left:1443px;top:817px;width:36px;height:36px;border-radius:50%;background:#1e1e1e"></div><div class="t" style="left:1443px;top:825px;width:36px;text-align:center;font-size:19px;line-height:20px;color:#c8c8c8">?</div></div></div>
</body></html>
